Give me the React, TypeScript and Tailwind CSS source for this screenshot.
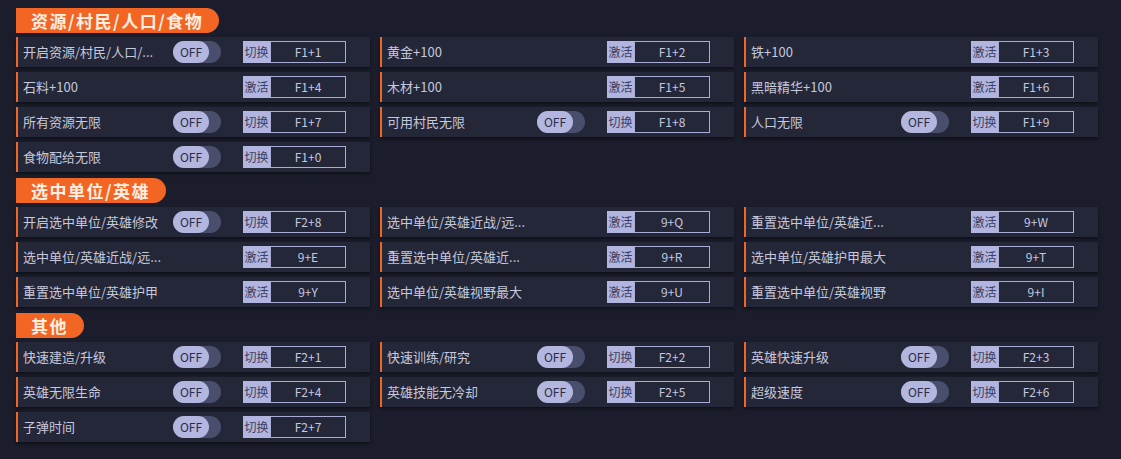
type Item = { name: string; toggle?: boolean; mode: '切换' | '激活'; key: string };

const sections: { title: string; items: Item[] }[] = [
  {
    title: '资源/村民/人口/食物',
    items: [
      { name: '开启资源/村民/人口/...', toggle: true, mode: '切换', key: 'F1+1' },
      { name: '黄金+100', mode: '激活', key: 'F1+2' },
      { name: '铁+100', mode: '激活', key: 'F1+3' },
      { name: '石料+100', mode: '激活', key: 'F1+4' },
      { name: '木材+100', mode: '激活', key: 'F1+5' },
      { name: '黑暗精华+100', mode: '激活', key: 'F1+6' },
      { name: '所有资源无限', toggle: true, mode: '切换', key: 'F1+7' },
      { name: '可用村民无限', toggle: true, mode: '切换', key: 'F1+8' },
      { name: '人口无限', toggle: true, mode: '切换', key: 'F1+9' },
      { name: '食物配给无限', toggle: true, mode: '切换', key: 'F1+0' },
    ],
  },
  {
    title: '选中单位/英雄',
    items: [
      { name: '开启选中单位/英雄修改', toggle: true, mode: '切换', key: 'F2+8' },
      { name: '选中单位/英雄近战/远...', mode: '激活', key: '9+Q' },
      { name: '重置选中单位/英雄近...', mode: '激活', key: '9+W' },
      { name: '选中单位/英雄近战/远...', mode: '激活', key: '9+E' },
      { name: '重置选中单位/英雄近...', mode: '激活', key: '9+R' },
      { name: '选中单位/英雄护甲最大', mode: '激活', key: '9+T' },
      { name: '重置选中单位/英雄护甲', mode: '激活', key: '9+Y' },
      { name: '选中单位/英雄视野最大', mode: '激活', key: '9+U' },
      { name: '重置选中单位/英雄视野', mode: '激活', key: '9+I' },
    ],
  },
  {
    title: '其他',
    items: [
      { name: '快速建造/升级', toggle: true, mode: '切换', key: 'F2+1' },
      { name: '快速训练/研究', toggle: true, mode: '切换', key: 'F2+2' },
      { name: '英雄快速升级', toggle: true, mode: '切换', key: 'F2+3' },
      { name: '英雄无限生命', toggle: true, mode: '切换', key: 'F2+4' },
      { name: '英雄技能无冷却', toggle: true, mode: '切换', key: 'F2+5' },
      { name: '超级速度', toggle: true, mode: '切换', key: 'F2+6' },
      { name: '子弹时间', toggle: true, mode: '切换', key: 'F2+7' },
    ],
  },
];

function Toggle() {
  return (
    <div className="w-[48px] h-[22px] rounded-full bg-[#4a4e6d] flex">
      <div className="w-[36px] h-[22px] rounded-full bg-[#b3b7e0] flex items-center justify-center text-[12px] text-[#2a2d4a]">
        OFF
      </div>
    </div>
  );
}

function Row({ item }: { item: Item }) {
  return (
    <div className="h-[30px] flex items-center bg-[#242738] border-l-2 border-[#f26522] pl-[5px] shadow-[0_2px_3px_rgba(0,0,0,0.45)]">
      <div className="w-[150px] text-[13px] text-[#c6c8dc] whitespace-nowrap overflow-hidden">{item.name}</div>
      <div className="w-[48px]">{item.toggle && <Toggle />}</div>
      <div className="ml-[22px] flex h-[22px]">
        <div className="w-[27px] bg-[#b1b5e0] text-[#3d4060] text-[12px] flex items-center justify-center">
          {item.mode}
        </div>
        <div className="w-[76px] border border-[#a9add6] text-[#c4c7e0] text-[12px] flex items-center justify-center">
          {item.key}
        </div>
      </div>
    </div>
  );
}

export default function App() {
  return (
    <div
      className="w-[1121px] h-[459px] bg-[#1b1d2c] pt-[8px] px-[16px] overflow-hidden"
      style={{ fontFamily: '"Noto Sans CJK SC", "Noto Sans", sans-serif' }}
    >
      {sections.map((s, i) => (
        <div key={s.title} className={i > 0 ? 'mt-[6px]' : ''}>
          <div className="inline-flex items-center h-[25px] bg-[#f26522] rounded-tl-[8px] rounded-r-full pl-[15px] pr-[16px] text-[17px] font-bold tracking-[1.5px] text-[#fdeee2]">
            {s.title}
          </div>
          <div className="mt-[4px] w-[1082px] grid grid-cols-3 gap-x-[10px] gap-y-[5px]">
            {s.items.map((it, j) => (
              <Row key={j} item={it} />
            ))}
          </div>
        </div>
      ))}
    </div>
  );
}
